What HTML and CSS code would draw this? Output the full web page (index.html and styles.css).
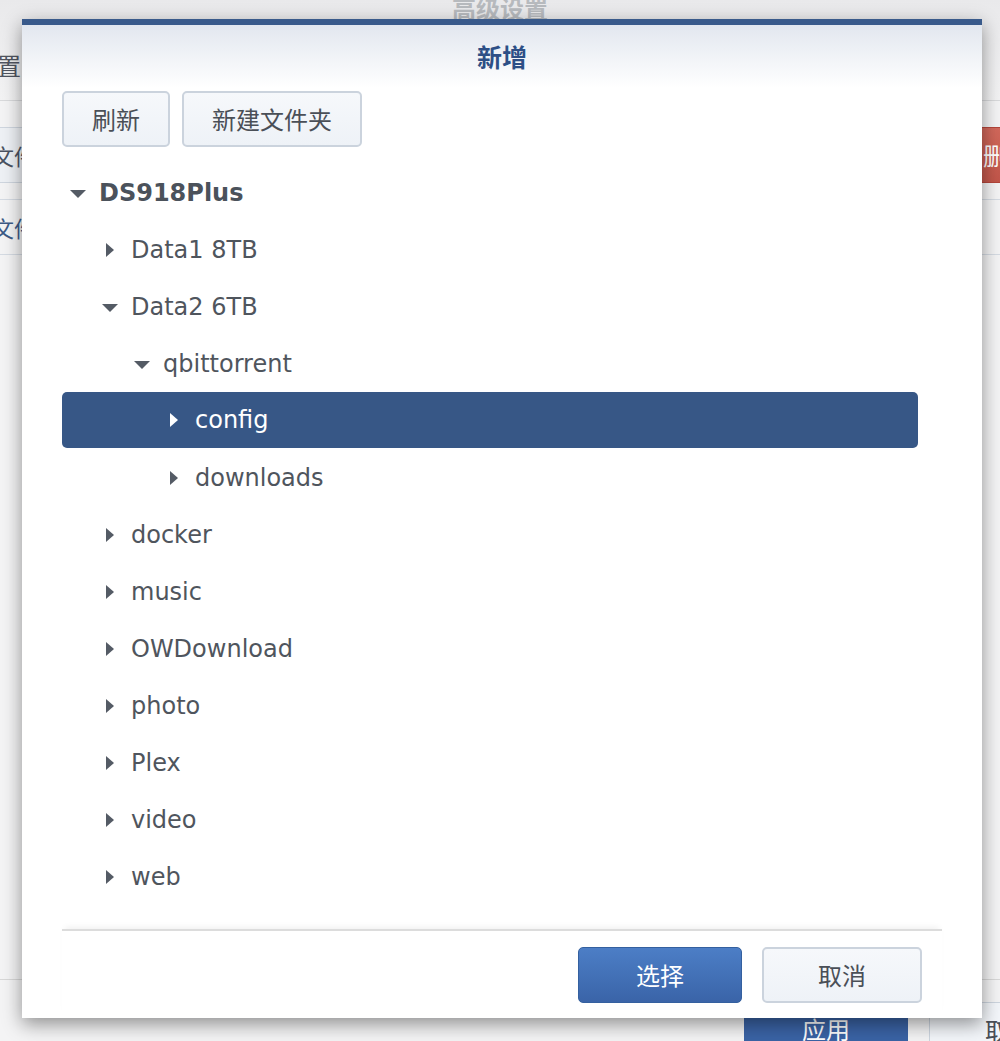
FILE: index.html
```html
<!DOCTYPE html>
<html lang="zh">
<head>
<meta charset="utf-8">
<title>新增</title>
<link rel="stylesheet" href="styles.css">
</head>
<body>
<div class="page">
  <div class="bg-header">
    <div class="bg-title">高级设置</div>
    <div class="bg-tab">置</div>
  </div>
  <div class="bg-row1">
    <div class="bg-field">文件</div>
    <div class="bg-del">删除</div>
  </div>
  <div class="bg-row2">
    <div class="bg-link">文件</div>
  </div>
  <div class="bg-fill"></div>
  <div class="bg-footer">
    <div class="bg-apply">应用</div>
    <div class="bg-cancel">取消</div>
  </div>
</div>

<div class="dialog">
  <div class="dlg-header"><span class="dlg-title">新增</span></div>
  <div class="toolbar">
    <button class="btn btn-refresh">刷新</button>
    <button class="btn btn-newfolder">新建文件夹</button>
  </div>
  <div class="tree">
    <div class="node lvl0 root"><span class="arrow down"></span><span class="label">DS918Plus</span></div>
    <div class="node lvl1"><span class="arrow right"></span><span class="label">Data1 8TB</span></div>
    <div class="node lvl1"><span class="arrow down"></span><span class="label">Data2 6TB</span></div>
    <div class="node lvl2"><span class="arrow down"></span><span class="label">qbittorrent</span></div>
    <div class="node lvl3 selected"><span class="arrow right"></span><span class="label">config</span></div>
    <div class="node lvl3"><span class="arrow right"></span><span class="label">downloads</span></div>
    <div class="node lvl1"><span class="arrow right"></span><span class="label">docker</span></div>
    <div class="node lvl1"><span class="arrow right"></span><span class="label">music</span></div>
    <div class="node lvl1"><span class="arrow right"></span><span class="label">OWDownload</span></div>
    <div class="node lvl1"><span class="arrow right"></span><span class="label">photo</span></div>
    <div class="node lvl1"><span class="arrow right"></span><span class="label">Plex</span></div>
    <div class="node lvl1"><span class="arrow right"></span><span class="label">video</span></div>
    <div class="node lvl1"><span class="arrow right"></span><span class="label">web</span></div>
  </div>
  <div class="footer">
    <button class="btn btn-primary">选择</button>
    <button class="btn btn-cancel">取消</button>
  </div>
</div>
</body>
</html>
```

FILE: styles.css
```css
* { box-sizing: border-box; }

html, body {
  margin: 0;
  padding: 0;
  width: 1000px;
  height: 1041px;
  overflow: hidden;
}

body {
  font-family: "DejaVu Sans", "Noto Sans CJK SC", sans-serif;
  background: #f4f4f5;
  position: relative;
}

/* ---------- background page ---------- */
.page {
  height: 1041px;
  display: flex;
  flex-direction: column;
  font-family: "Noto Sans CJK SC", sans-serif;
}

.bg-header {
  height: 101px;
  display: flex;
  flex-direction: column;
  background: linear-gradient(#e9e9eb, #f3f3f4);
  border-bottom: 1px solid #d9dadc;
}

.bg-title {
  text-align: center;
  font-size: 24px;
  font-weight: bold;
  line-height: 28px;
  margin-top: -6px;
  color: #b7babe;
}

.bg-tab {
  margin-top: 29px;
  margin-left: -3px;
  font-size: 24px;
  line-height: 28px;
  color: #505560;
}

.bg-row1 {
  margin-top: 26px;
  height: 56px;
  display: flex;
  justify-content: space-between;
  align-items: stretch;
  background: #f7f8fa;
}

.bg-field {
  width: 30px;
  border-top: 1px solid #cfd6df;
  border-bottom: 1px solid #cfd6df;
  background: #eef1f5;
  font-size: 22px;
  line-height: 54px;
  text-indent: -8px;
  color: #4a5262;
  white-space: nowrap;
  overflow: hidden;
}

.bg-del {
  width: 80px;
  margin-right: -52px;
  padding-left: 10px;
  background: linear-gradient(#d2685b, #c2564a);
  border: 1px solid #b3463b;
  color: #fff;
  font-size: 24px;
  line-height: 54px;
  white-space: nowrap;
  overflow: hidden;
}

.bg-row2 {
  margin-top: 16px;
  height: 56px;
  border-top: 1px solid #d5dbe3;
  border-bottom: 1px solid #d5dbe3;
  display: flex;
  align-items: center;
}

.bg-link {
  width: 30px;
  overflow: hidden;
  white-space: nowrap;
  font-size: 22px;
  text-indent: -8px;
  color: #3d5a86;
}

.bg-fill { flex: 1; }

.bg-footer {
  height: 62px;
  border-top: 1px solid #d8d8d8;
  display: flex;
  padding-top: 22px;
  padding-left: 744px;
}

.bg-apply {
  width: 164px;
  height: 56px;
  background: #3a63a5;
  color: #fff;
  font-size: 24px;
  text-align: center;
  line-height: 54px;
  flex-shrink: 0;
}

.bg-cancel {
  margin-left: 21px;
  width: 120px;
  height: 56px;
  background: #f3f6fa;
  border: 1px solid #cdd5df;
  color: #4a4f57;
  font-size: 24px;
  line-height: 54px;
  padding-left: 55px;
  white-space: nowrap;
  overflow: hidden;
  flex-shrink: 0;
}

/* ---------- dialog ---------- */
.dialog {
  position: absolute;
  left: 22px;
  top: 19px;
  width: 960px;
  height: 999px;
  background: #fff;
  border-top: 6px solid #395a8b;
  box-shadow: 0 6px 18px rgba(0, 0, 0, 0.42);
  display: flex;
  flex-direction: column;
}

.dlg-header {
  height: 63px;
  flex-shrink: 0;
  background: linear-gradient(#e2e7ef, #ffffff);
  display: flex;
  align-items: center;
  justify-content: center;
}

.dlg-title {
  font-family: "Noto Sans CJK SC", sans-serif;
  font-size: 25px;
  font-weight: bold;
  color: #2d4f86;
  margin-top: -2px;
}

.toolbar {
  margin: 3px 40px 0;
  display: flex;
  gap: 12px;
  flex-shrink: 0;
}

.btn {
  font-family: "Noto Sans CJK SC", sans-serif;
  font-size: 24px;
  height: 56px;
  padding: 0;
  color: #4a4f57;
  background: linear-gradient(#f6f8fb, #eef2f7);
  border: 2px solid #cbd3dd;
  border-radius: 5px;
  line-height: 50px;
  text-align: center;
}

.btn-refresh { width: 108px; }
.btn-newfolder { width: 180px; }

.tree {
  flex: 1;
  margin: 17px 64px 0 40px;
  display: flex;
  flex-direction: column;
}

.node {
  height: 57px;
  flex-shrink: 0;
  display: flex;
  align-items: center;
  border-radius: 5px;
  color: #4f555d;
  font-size: 24px;
}

.node.root .label { font-weight: bold; color: #4b525b; }

.lvl0 { padding-left: 8px; }
.lvl1 { padding-left: 40px; }
.lvl2 { padding-left: 72px; }
.lvl3 { padding-left: 104px; }

.node.selected {
  background: #375786;
  color: #fff;
  height: 56px;
  margin-bottom: 1px;
}

.arrow {
  width: 16px;
  height: 16px;
  margin-right: 13px;
  display: flex;
  align-items: center;
  justify-content: center;
  flex-shrink: 0;
}

.arrow::before {
  content: "";
  display: block;
  width: 0;
  height: 0;
}

.arrow.down::before {
  border-left: 8px solid transparent;
  border-right: 8px solid transparent;
  border-top: 8px solid #545b65;
  margin-top: 2px;
}

.arrow.right::before {
  border-top: 7px solid transparent;
  border-bottom: 7px solid transparent;
  border-left: 8px solid #545b65;
}

.node.selected .arrow.right::before { border-left-color: #ffffff; }

.label {
  white-space: nowrap;
  line-height: 1;
}

.footer {
  flex-shrink: 0;
  margin: 0 40px;
  height: 89px;
  border-top: 2px solid #dcdcdc;
  box-shadow: 0 -5px 6px -3px rgba(0, 0, 0, 0.06);
  display: flex;
  justify-content: flex-end;
  gap: 20px;
  padding: 16px 20px 0 0;
}

.btn-primary {
  width: 164px;
  color: #fff;
  background: linear-gradient(#4c7ec6, #3a64a8);
  border: 1px solid #34609f;
  line-height: 52px;
}

.btn-cancel { width: 160px; }
```
